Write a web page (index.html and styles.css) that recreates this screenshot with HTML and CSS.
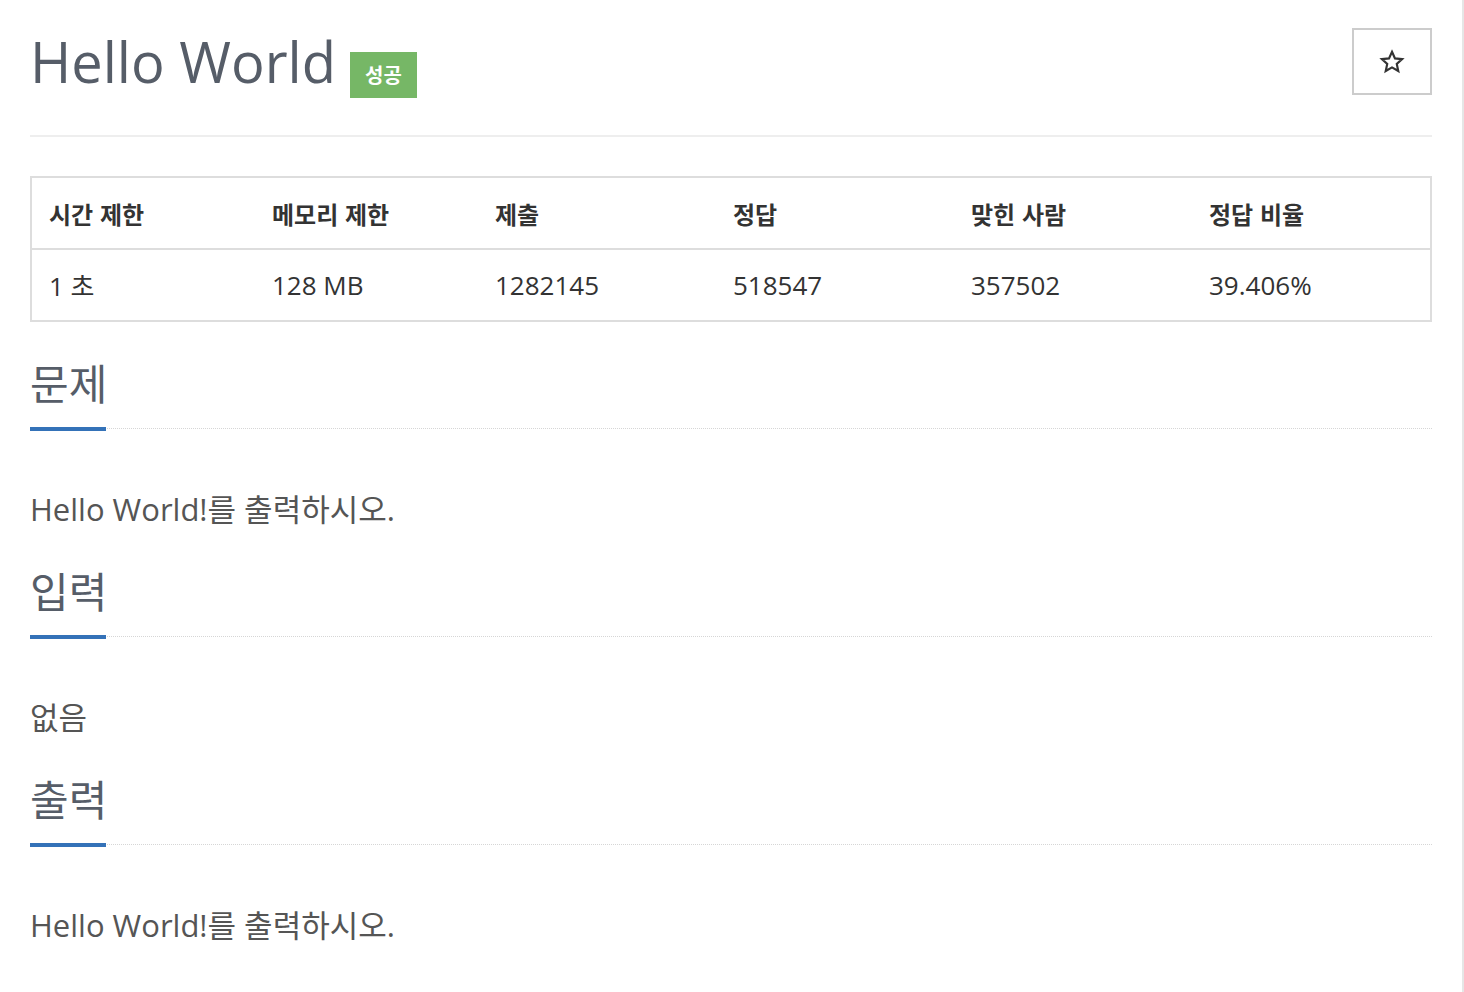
FILE: index.html
```html
<!DOCTYPE html>
<html lang="ko">
<head>
<meta charset="utf-8">
<title>Hello World</title>
<link rel="stylesheet" href="styles.css">
</head>
<body>
<div class="page">
  <div class="page-header">
    <h1 class="title"><span class="title-text">Hello World</span><span class="badge">성공</span></h1>
    <button class="star-btn" type="button" aria-label="즐겨찾기">
      <svg width="26" height="26" viewBox="0 0 24 24"><path d="M12 2.6l2.75 6.05 6.6.7-4.95 4.45 1.4 6.5L12 17l-5.8 3.3 1.4-6.5L2.65 9.35l6.6-.7z" fill="none" stroke="#333" stroke-width="2" stroke-linejoin="miter"/></svg>
    </button>
  </div>

  <table class="info">
    <thead>
      <tr><th class="c1">시간 제한</th><th class="c2">메모리 제한</th><th class="c3">제출</th><th class="c4">정답</th><th class="c5">맞힌 사람</th><th>정답 비율</th></tr>
    </thead>
    <tbody>
      <tr><td>1 초</td><td>128 MB</td><td>1282145</td><td>518547</td><td>357502</td><td>39.406%</td></tr>
    </tbody>
  </table>

  <section class="section">
    <div class="headline"><h2>문제</h2></div>
    <p class="text">Hello World!를 출력하시오.</p>
  </section>
  <section class="section">
    <div class="headline"><h2>입력</h2></div>
    <p class="text">없음</p>
  </section>
  <section class="section">
    <div class="headline"><h2>출력</h2></div>
    <p class="text">Hello World!를 출력하시오.</p>
  </section>
</div>
</body>
</html>
```

FILE: styles.css
```css
html, body {
  margin: 0;
  padding: 0;
  background: #fff;
}
body {
  font-family: "Open Sans", "Noto Sans CJK KR", sans-serif;
  color: #333;
}
.page {
  width: 1402px;
  min-height: 992px;
  padding: 0 30px;
  border-right: 2px solid #e6e6e6;
  box-sizing: content-box;
}
.page-header {
  display: flex;
  justify-content: space-between;
  align-items: flex-start;
  border-bottom: 2px solid #eee;
  height: 137px;
  box-sizing: border-box;
}
.title {
  margin: 0;
  padding-top: 23px;
  display: flex;
  align-items: flex-start;
  font-weight: 400;
}
.title-text {
  font-family: "Open Sans", sans-serif;
  font-size: 56px;
  line-height: 76px;
  color: #565d68;
}
.badge {
  margin-left: 14px;
  margin-top: 29px;
  width: 67px;
  height: 46px;
  line-height: 46px;
  text-align: center;
  background: #76b766;
  color: #fff;
  font-size: 20px;
  font-weight: 700;
  font-family: "Noto Sans CJK KR", sans-serif;
}
.star-btn {
  margin-top: 28px;
  width: 80px;
  height: 67px;
  background: #fff;
  border: 2px solid #ccc;
  display: flex;
  align-items: center;
  justify-content: center;
  padding: 0;
}
.info {
  margin-top: 39px;
  width: 100%;
  border-collapse: collapse;
  border: 2px solid #ddd;
  table-layout: fixed;
}
.info th, .info td {
  text-align: left;
  padding: 0 0 0 17px;
  height: 70px;
  font-size: 26px;
  color: #333;
}
.info th {
  font-family: "Noto Sans CJK KR", sans-serif;
  font-weight: 700;
  font-size: 24px;
  border-bottom: 2px solid #ddd;
}
.info .c1, .info .c2 { width: 206px; }
.info .c3, .info .c4, .info .c5 { width: 221px; }
.headline {
  margin-top: 39px;
  border-bottom: 1px dotted #d6d6d6;
  height: 67px;
  position: relative;
}
.headline h2 {
  margin: 0;
  width: 76px;
  white-space: nowrap;
  font-family: "Noto Sans CJK KR", sans-serif;
  font-weight: 400;
  font-size: 42px;
  line-height: 56px;
  color: #565d68;
  border-bottom: 4px solid #3472b8;
  position: absolute;
  left: 0;
  bottom: -3px;
  padding-bottom: 17px;
}
.text {
  margin: 0;
  padding-top: 59px;
  padding-bottom: 0;
  font-size: 31px;
  line-height: 42px;
  color: #555;
  font-family: "Open Sans", "Noto Sans CJK KR", sans-serif;
}
```
